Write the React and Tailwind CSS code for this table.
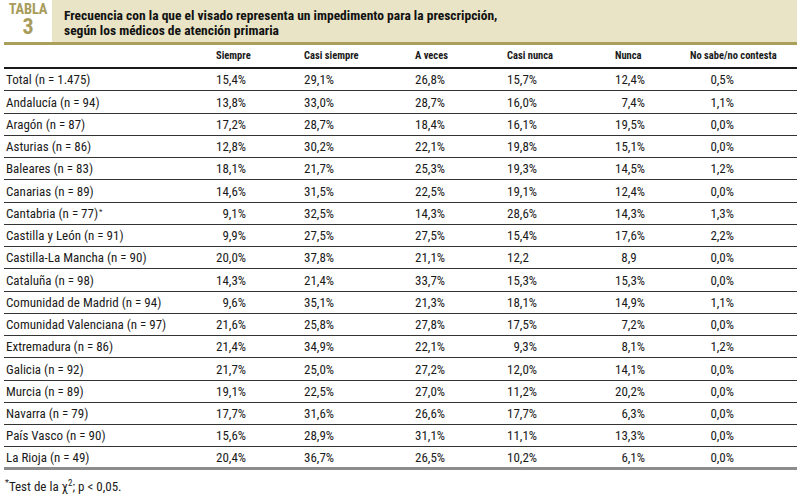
import React from "react";

const rows = [
  ["Total (n = 1.475)", "15,4%", "29,1%", "26,8%", "15,7%", "12,4%", "0,5%"],
  ["Andalucía (n = 94)", "13,8%", "33,0%", "28,7%", "16,0%", "7,4%", "1,1%"],
  ["Aragón (n = 87)", "17,2%", "28,7%", "18,4%", "16,1%", "19,5%", "0,0%"],
  ["Asturias (n = 86)", "12,8%", "30,2%", "22,1%", "19,8%", "15,1%", "0,0%"],
  ["Baleares (n = 83)", "18,1%", "21,7%", "25,3%", "19,3%", "14,5%", "1,2%"],
  ["Canarias (n = 89)", "14,6%", "31,5%", "22,5%", "19,1%", "12,4%", "0,0%"],
  ["Cantabria (n = 77)*", "9,1%", "32,5%", "14,3%", "28,6%", "14,3%", "1,3%"],
  ["Castilla y León (n = 91)", "9,9%", "27,5%", "27,5%", "15,4%", "17,6%", "2,2%"],
  ["Castilla-La Mancha (n = 90)", "20,0%", "37,8%", "21,1%", "12,2", "8,9", "0,0%"],
  ["Cataluña (n = 98)", "14,3%", "21,4%", "33,7%", "15,3%", "15,3%", "0,0%"],
  ["Comunidad de Madrid (n = 94)", "9,6%", "35,1%", "21,3%", "18,1%", "14,9%", "1,1%"],
  ["Comunidad Valenciana (n = 97)", "21,6%", "25,8%", "27,8%", "17,5%", "7,2%", "0,0%"],
  ["Extremadura (n = 86)", "21,4%", "34,9%", "22,1%", "9,3%", "8,1%", "1,2%"],
  ["Galicia (n = 92)", "21,7%", "25,0%", "27,2%", "12,0%", "14,1%", "0,0%"],
  ["Murcia (n = 89)", "19,1%", "22,5%", "27,0%", "11,2%", "20,2%", "0,0%"],
  ["Navarra (n = 79)", "17,7%", "31,6%", "26,6%", "17,7%", "6,3%", "0,0%"],
  ["País Vasco (n = 90)", "15,6%", "28,9%", "31,1%", "11,1%", "13,3%", "0,0%"],
  ["La Rioja (n = 49)", "20,4%", "36,7%", "26,5%", "10,2%", "6,1%", "0,0%"],
];

const headers = ["Siempre", "Casi siempre", "A veces", "Casi nunca", "Nunca", "No sabe/no contesta"];

const grid = "grid grid-cols-[212px_88px_111px_92px_108px_75px_107px]";

function Val({ v, last }) {
  const noPct = !v.endsWith("%");
  return (
    <div className={last ? "pl-[10px]" : ""}>
      <div className={last ? "w-[34px] text-right whitespace-nowrap" : "w-[30px] text-right whitespace-nowrap"}>
        {v}
        {noPct ? <span className="invisible">%</span> : null}
      </div>
    </div>
  );
}

export default function App() {
  return (
    <div
      className="w-[802px] h-[498px] bg-white text-[#1a1a1a] overflow-hidden font-stretch-condensed"
      style={{ fontFamily: '"Liberation Sans Narrow", "Roboto Condensed", "Noto Sans", "Liberation Sans", sans-serif' }}
    >
      <div className="flex h-[42px]">
        <div className="w-[52px] flex flex-col items-center pl-[4px] text-[#a89c5c] font-bold">
          <div className="text-[14.5px] leading-[14px] mt-[3px] tracking-[-0.2px]">TABLA</div>
          <div className="text-[22px] leading-[20px]">3</div>
        </div>
        <div className="w-[745px] bg-[#e8e4c5] pl-[12px] pt-[8px] text-[13.5px] leading-[15px] font-bold text-[#111] whitespace-nowrap">
          <div>Frecuencia con la que el visado representa un impedimento para la prescripción,</div>
          <div>según los médicos de atención primaria</div>
        </div>
      </div>
      <div className="ml-[4px] w-[793px] border-t-[3px] border-[#ab9f5c]">
        <div className={`${grid} h-[24px] items-center border-b-2 border-[#1a1a1a] text-[10.5px] font-bold whitespace-nowrap`}>
          <div></div>
          {headers.map((h) => (
            <div key={h}>{h}</div>
          ))}
        </div>
        {rows.map((r, i) => (
          <div
            key={r[0]}
            className={`${grid} h-[22.25px] items-center pt-[1px] text-[13px] ${
              i === rows.length - 1 ? "border-b-[3px] border-[#8c8c8c]" : "border-b border-[#333]"
            }`}
          >
            <div className="pl-[2px] whitespace-nowrap">
              {r[0].endsWith("*") ? (
                <>
                  {r[0].slice(0, -1)}
                  <sup className="text-[8px] ml-[1px]">*</sup>
                </>
              ) : (
                r[0]
              )}
            </div>
            {r.slice(1).map((v, j) => (
              <Val key={j} v={v} last={j === 5} />
            ))}
          </div>
        ))}
      </div>
      <div className="ml-[5px] mt-[10px] text-[13px] leading-[14px] whitespace-nowrap">
        <sup className="text-[9px]">*</sup>Test de la χ<sup className="text-[9px]">2</sup>; p &lt; 0,05.
      </div>
    </div>
  );
}
